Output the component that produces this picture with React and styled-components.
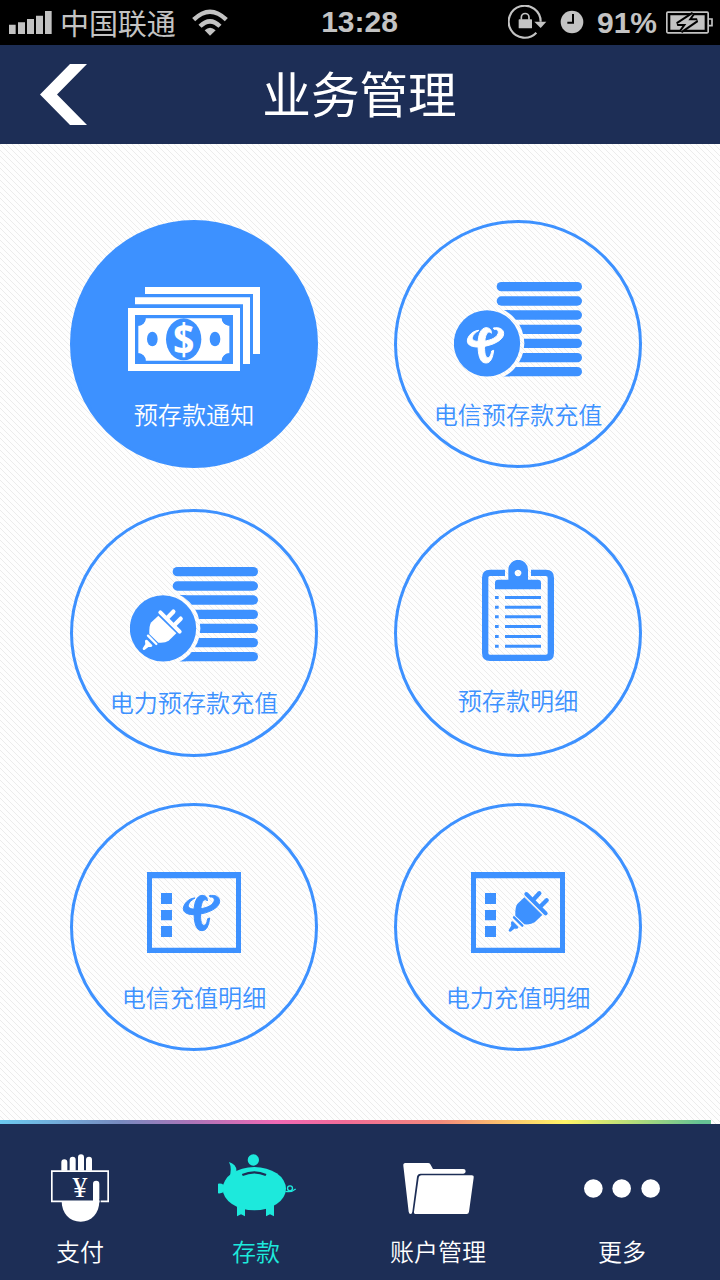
import React from "react";
import styled, { createGlobalStyle } from "styled-components";

const NAVY = "#1d2e56";
const BLUE = "#3d91ff";
const PAPER = "#fefefe";
const TEAL = "#1de9dc";
const SILVER = "#c3c3c3";

const Global = createGlobalStyle`
  *, *::before, *::after { box-sizing: border-box; }
  body { margin: 0; }
`;

const Screen = styled.div`
  width: 720px;
  height: 1280px;
  display: flex;
  flex-direction: column;
  overflow: hidden;
  font-family: "Noto Sans CJK SC", sans-serif;
  font-weight: 350;
  background-color: ${PAPER};
`;

const StatusBar = styled.div`
  height: 45px;
  flex: none;
  display: grid;
  grid-template-columns: 1fr auto 1fr;
  align-items: center;
  padding: 0 7px 0 9px;
  background: #000;
  color: ${SILVER};
  svg { display: block; flex: none; }
`;

const StatusGroup = styled.div`
  display: flex;
  align-items: center;
  justify-content: ${(p) => (p.$end ? "flex-end" : "flex-start")};
`;

const Carrier = styled.span`
  margin: 0 16px 0 8px;
  padding-bottom: 2px;
  font-size: 29px;
  line-height: 42px;
  font-weight: 400;
  letter-spacing: -0.1px;
  white-space: nowrap;
`;

const Time = styled.span`
  font: bold 30px/43px "Liberation Sans", Arial, sans-serif;
  padding: 0 3px 2px 0;
`;

const BatteryLevel = styled.span`
  margin: 0 9px 0 13px;
  font: bold 30px/44px "Liberation Sans", Arial, sans-serif;
`;

const ClockSlot = styled.span`
  margin-left: 13px;
  padding-bottom: 2px;
`;

const Header = styled.header`
  height: 99px;
  flex: none;
  display: grid;
  grid-template-columns: 127px 1fr 127px;
  align-items: center;
  background: ${NAVY};
`;

const BackButton = styled.button`
  padding: 0 0 0 40px;
  border: 0;
  background: none;
  svg { display: block; }
`;

const Title = styled.h1`
  margin: 0;
  padding: 0 1px 4px 0;
  color: #fff;
  font-size: 48.6px;
  line-height: 95px;
  font-weight: 400;
  text-align: center;
`;

const speck = "conic-gradient(from 270deg at 1px 1px, #ececec 90deg, transparent 0)";
const hatch = [0, 1, 2, 3, 4, 5].map((i) => `${speck} ${i}px ${i}px / 6px 6px`).join(", ");

const Main = styled.main`
  flex: 1;
  display: flex;
  flex-direction: column;
  justify-content: space-between;
  background: ${hatch};
  background-color: ${PAPER};
`;

const Services = styled.div`
  display: grid;
  grid-template-columns: 248px 248px;
  grid-template-rows: 289px 294px 248px;
  column-gap: 76px;
  padding: 76px 0 0 70px;
`;

const Tile = styled.button`
  width: 248px;
  height: 248px;
  padding: 0;
  display: flex;
  flex-direction: column;
  align-items: center;
  border: 3px solid ${BLUE};
  border-radius: 50%;
  background: ${(p) => (p.$active ? BLUE : "transparent")};
  color: ${(p) => (p.$active ? "#fff" : BLUE)};
  font-family: inherit;
  font-weight: inherit;
`;

const IconArea = styled.span`
  height: ${(p) => p.$height}px;
  padding-top: ${(p) => p.$top}px;
  flex: none;
  svg { display: block; }
`;

const TileLabel = styled.span`
  font-size: 24.1px;
  line-height: 36px;
  white-space: nowrap;
`;

const Rainbow = styled.div`
  width: 711px;
  height: 4px;
  background: linear-gradient(90deg, #6ccaf0 0, #788bc0 120px, #ab75b8 190px, #ef69b4 277px,
    #f16c97 345px, #f28a7c 440px, #fbbf6e 500px, #fff467 565px, #b2dc7b 635px, #66c394 700px);
`;

const TabBar = styled.nav`
  height: 156px;
  flex: none;
  display: grid;
  grid-template-columns: 160px 192px 172px 196px;
  background: ${NAVY};
`;

const Tab = styled.button`
  padding: 0 0 11px;
  border: 0;
  background: none;
  display: flex;
  flex-direction: column;
  justify-content: flex-start;
  align-items: center;
  color: ${(p) => (p.$active ? TEAL : "#fff")};
  font-family: inherit;
  font-weight: inherit;
`;

const TabIcon = styled.span`
  height: 109px;
  padding: ${(p) => p.$top}px 0 0 ${(p) => p.$shift || 0}px;
  svg { display: block; }
`;

const TabLabel = styled.span`
  font-size: 24px;
  line-height: 36px;
`;

const Signal = () => (
  <svg width="43" height="23" viewBox="27 30 129 69" fill={SILVER}>
    <path d="M27 71h20v28H27zM54 64h21v35H54zM81 54h21v45H81zM108 44h21v55h-21zM135 30h20v69h-20z" />
  </svg>
);

const Wifi = () => (
  <svg width="36" height="27" viewBox="574 25 108 81" fill="none" stroke={SILVER} strokeWidth="13">
    <path d="M579 57Q628 9 677 57" />
    <path d="M598 77Q628 47 658 77" />
    <path d="M612 89Q628 74 645 89L628 105z" fill={SILVER} stroke="none" />
  </svg>
);

const RotationLock = () => (
  <svg width="39" height="35" viewBox="441 14 117 105">
    <path d="M526 97A48 48 0 1 1 539 64" fill="none" stroke={SILVER} strokeWidth="6.5" />
    <path d="M520 64h36l-17 19z" fill={SILVER} />
    <rect x="473" y="57" width="40" height="27" rx="2" fill={SILVER} />
    <path d="M481 58V51a11.500 11.500 0 0 1 23 0V58" fill="none" stroke={SILVER} strokeWidth="5" />
  </svg>
);

const Clock = () => (
  <svg width="24" height="24" viewBox="599 28 72 72">
    <circle cx="635" cy="64" r="34" fill={SILVER} />
    <path d="M638 40V66H621" fill="none" stroke="#000" strokeWidth="6" />
  </svg>
);

const Battery = () => (
  <svg width="47" height="24" viewBox="918 30 141 72">
    <rect x="920.5" y="33.500" width="124" height="62" rx="3" fill="none" stroke={SILVER} strokeWidth="5" />
    <path d="M931 43h103v43H931z" fill={SILVER} />
    <path d="M1046 54h10v20h-10" fill="none" stroke={SILVER} strokeWidth="5" />
    <path d="M999 38L952 69H979L963 91L1011 58H985z" fill={SILVER} stroke="#000" strokeWidth="12" paintOrder="stroke" strokeLinejoin="bevel" />
  </svg>
);

const Chevron = () => (
  <svg width="47" height="61" viewBox="0 0 47 61" fill="#fff">
    <path d="M30 0H47L17 30.500 47 61H30L0 30.500z" />
  </svg>
);

const Banknotes = () => (
  <svg width="132" height="84" viewBox="204 231 396 252" fill="#fff">
    <path d="M255 231H600V432H579V252H255zM225 262H570V462H549V283H225z" />
    <path fillRule="evenodd" d="M204 294H540V483H204zM225 315V462H519V315z" />
    <path d="M257 325H485A23 22 0 0 0 508 347V430A23 22 0 0 0 485 452H257A23 22 0 0 0 235 430V347A23 22 0 0 0 257 325z" />
    <path d="M235 325h22a22 22 0 0 1-22 22zM508 325v22a22 22 0 0 1-22-22zM235 452v-22a22 22 0 0 1 22 22zM508 452h-22a22 22 0 0 1 22-22z" fill={BLUE} />
    <ellipse cx="371" cy="388" rx="53" ry="63" fill={BLUE} />
    <ellipse cx="277" cy="387" rx="16" ry="22" fill={BLUE} />
    <ellipse cx="465" cy="387" rx="16" ry="22" fill={BLUE} />
    <text transform="translate(371 434) scale(.88 1)" textAnchor="middle" fontFamily="Open Sans, sans-serif" fontWeight="700" fontSize="128">$</text>
  </svg>
);

const TelecomMark = () => (
  <g stroke="currentColor" strokeWidth="3" strokeLinejoin="round">
    <path d="M405 309C389 309 370 325 370 341C370 354 385 360 408 359C447 355 479 338 479 319C479 304 464 299 448 302L450 306C460 305 465 311 462 319C457 333 434 342 408 342C393 343 384 339 385 331C386 322 395 315 405 309z" />
    <path d="M442 318C443 309 438 301 426 301C410 302 403 323 402 347C402 383 407 407 426 407C440 407 446 392 449 369L443 371C441 383 437 392 431 391C422 389 421 370 422 347C423 327 428 315 435 314Q439 313 442 318z" />
  </g>
);

const PlugMark = () => (
  <g stroke="currentColor" strokeLinecap="round">
    <path stroke="none" d="M418 307L397 327Q390 336 391 362L418 388Q438 390 449 382L472 360z" />
    <path d="M424 297L482 355" strokeWidth="12" />
    <path d="M447 312L463 295M467 334L485 316" strokeWidth="13" />
    <path d="M387 367L412 392" strokeWidth="7" />
    <path d="M382 383L396 397H391L386 395V398L375 406L383 393z" strokeWidth="8" strokeLinejoin="round" />
  </g>
);

const CoinStack = ({ id, children }) => (
  <svg width="128" height="95" viewBox="207 215 384 285" fill={BLUE}>
    <mask id={id}>
      <path d="M200 200h400v310H200z" fill="#fff" />
      <circle cx="306" cy="399" r="112" fill="#000" />
    </mask>
    <g mask={`url(#${id})`}>
      {[215, 258, 300, 343, 385, 428, 470].map((y) => (
        <rect key={y} x="335" y={y} width="256" height="28" rx="14" />
      ))}
      <path d="M345 300h30v28h-30zM345 470h30v28h-30z" />
    </g>
    <circle cx="306" cy="399" r="99.500" />
    <g fill="#fff" color="#fff">{children}</g>
  </svg>
);

const TelecomCoins = () => (
  <CoinStack id="telecom-gap">
    <g transform="translate(-123 51)"><TelecomMark /></g>
  </CoinStack>
);

const PowerCoins = () => (
  <CoinStack id="power-gap">
    <g transform="translate(-126 54)"><PlugMark /></g>
  </CoinStack>
);

const Clipboard = () => (
  <svg width="72" height="101" viewBox="291 180 216 303" fill={BLUE}>
    <path d="M360 218.500H315Q300.500 218.500 300.500 233V459Q300.500 473.500 315 473.500H483Q497.500 473.500 497.500 459V233Q497.500 218.500 483 218.500H438" fill="none" stroke={BLUE} strokeWidth="19" />
    <path fillRule="evenodd" d="M370 239V209a29 29 0 0 1 59 0V239H459q9 0 9 9V268H330V248q0-9 9-9zM399 209a10 10 0 1 0 .1 0z" />
    {[288, 317, 346, 375, 405, 434].map((y) => (
      <path key={y} d={`M330 ${y}h11v9h-11zM360 ${y}h108v9H360z`} />
    ))}
  </svg>
);

const Ledger = ({ children }) => (
  <svg width="94" height="81" viewBox="261 231 282 243" fill={BLUE} color={BLUE}>
    <path fillRule="evenodd" d="M261 231H543V474H261zM276 250V458H528V250z" />
    <path d="M303 294h33v33h-33zM303 345h33v31h-33zM303 393h33v33h-33z" />
    {children}
  </svg>
);

const TelecomLedger = () => <Ledger><TelecomMark /></Ledger>;
const PowerLedger = () => <Ledger><g transform="translate(3 0)"><PlugMark /></g></Ledger>;

const HandCash = () => (
  <svg width="58" height="68" viewBox="153 133 174 204" fill="#fff">
    <path d="M184 183V158a9 9 0 0 1 18 0V183zM209 183V150a9 9 0 0 1 18 0V183zM234 183V143a9 9 0 0 1 18 0V183zM258 183V150a9 9 0 0 1 18 0V183z" />
    <path d="M155.500 184.500H324.500V275H155.500z" fill="none" stroke="#fff" strokeWidth="5" />
    <path d="M185 274H298C298 311 274 336 242 336C209 336 185 311 185 274z" />
    <path d="M279 280V223a9.500 9.500 0 0 1 19 0V280z" />
    <path d="M300.500 268v12" stroke={NAVY} strokeWidth="3" />
    <text x="240" y="263" textAnchor="middle" fontFamily="Liberation Serif, serif" fontWeight="400" fontSize="89">¥</text>
  </svg>
);

const PiggyBank = () => (
  <svg width="78" height="63" viewBox="654 131 234 189" fill={TEAL}>
    <circle cx="760" cy="149" r="17" />
    <ellipse cx="763" cy="235" rx="95" ry="65" />
    <path d="M687 155Q711 163 709 183L688 203Q697 174 687 155zM654 220Q664 218 670 223V246Q663 250 654 249zM711 280H735V318L723 312 711 318zM798 280H822V318L810 312 798 318z" />
    <path d="M727 194Q763 178 798 194" fill="none" stroke={NAVY} strokeWidth="7" />
    <path d="M856 243Q875 247 887 236" fill="none" stroke={TEAL} strokeWidth="4" />
    <circle cx="870" cy="234" r="7.500" fill="none" stroke={TEAL} strokeWidth="4" />
  </svg>
);

const Folder = () => (
  <svg width="71" height="51" viewBox="127 159 213 153" fill="#fff">
    <path d="M134 159H202q5 0 7 4l8 14H308q7 0 7 7t-7 7H180q-9 0-11 9L155 305q-1 7-5 7q-5 0-6-7L128 167Q127 159 134 159z" />
    <path d="M183 196H333q7 0 6 7L325 305q-1 7-7 7H166q-7 0-6-7L174 204q1-8 9-8z" />
  </svg>
);

const MoreDots = () => (
  <svg width="76" height="19" viewBox="672 205.500 228 57" fill="#fff">
    <circle cx="700" cy="234" r="28" />
    <circle cx="785" cy="234" r="28" />
    <circle cx="872" cy="234" r="28" />
  </svg>
);

const services = [
  { label: "预存款通知", icon: Banknotes, top: 64, labelTop: 173, active: true },
  { label: "电信预存款充值", icon: TelecomCoins, top: 58.67, labelTop: 173 },
  { label: "电力预存款充值", icon: PowerCoins, top: 54.67, labelTop: 172 },
  { label: "预存款明细", icon: Clipboard, top: 48, labelTop: 170 },
  { label: "电信充值明细", icon: TelecomLedger, top: 66, labelTop: 173 },
  { label: "电力充值明细", icon: PowerLedger, top: 66, labelTop: 173 },
];

const tabs = [
  { label: "支付", icon: HandCash, top: 30 },
  { label: "存款", icon: PiggyBank, top: 30, shift: 2, active: true },
  { label: "账户管理", icon: Folder, top: 39 },
  { label: "更多", icon: MoreDots, top: 54.5 },
];

export default function App() {
  return (
    <Screen>
      <Global />
      <StatusBar>
        <StatusGroup>
          <Signal />
          <Carrier>中国联通</Carrier>
          <Wifi />
        </StatusGroup>
        <Time>13:28</Time>
        <StatusGroup $end>
          <RotationLock />
          <ClockSlot><Clock /></ClockSlot>
          <BatteryLevel>91%</BatteryLevel>
          <Battery />
        </StatusGroup>
      </StatusBar>
      <Header>
        <BackButton aria-label="返回"><Chevron /></BackButton>
        <Title>业务管理</Title>
      </Header>
      <Main>
        <Services>
          {services.map(({ label, icon: Icon, top, labelTop, active }) => (
            <Tile key={label} $active={active}>
              <IconArea $top={top} $height={labelTop}><Icon /></IconArea>
              <TileLabel>{label}</TileLabel>
            </Tile>
          ))}
        </Services>
        <Rainbow />
      </Main>
      <TabBar>
        {tabs.map(({ label, icon: Icon, active, top, shift }) => (
          <Tab key={label} $active={active}>
            <TabIcon $top={top} $shift={shift}><Icon /></TabIcon>
            <TabLabel>{label}</TabLabel>
          </Tab>
        ))}
      </TabBar>
    </Screen>
  );
}
